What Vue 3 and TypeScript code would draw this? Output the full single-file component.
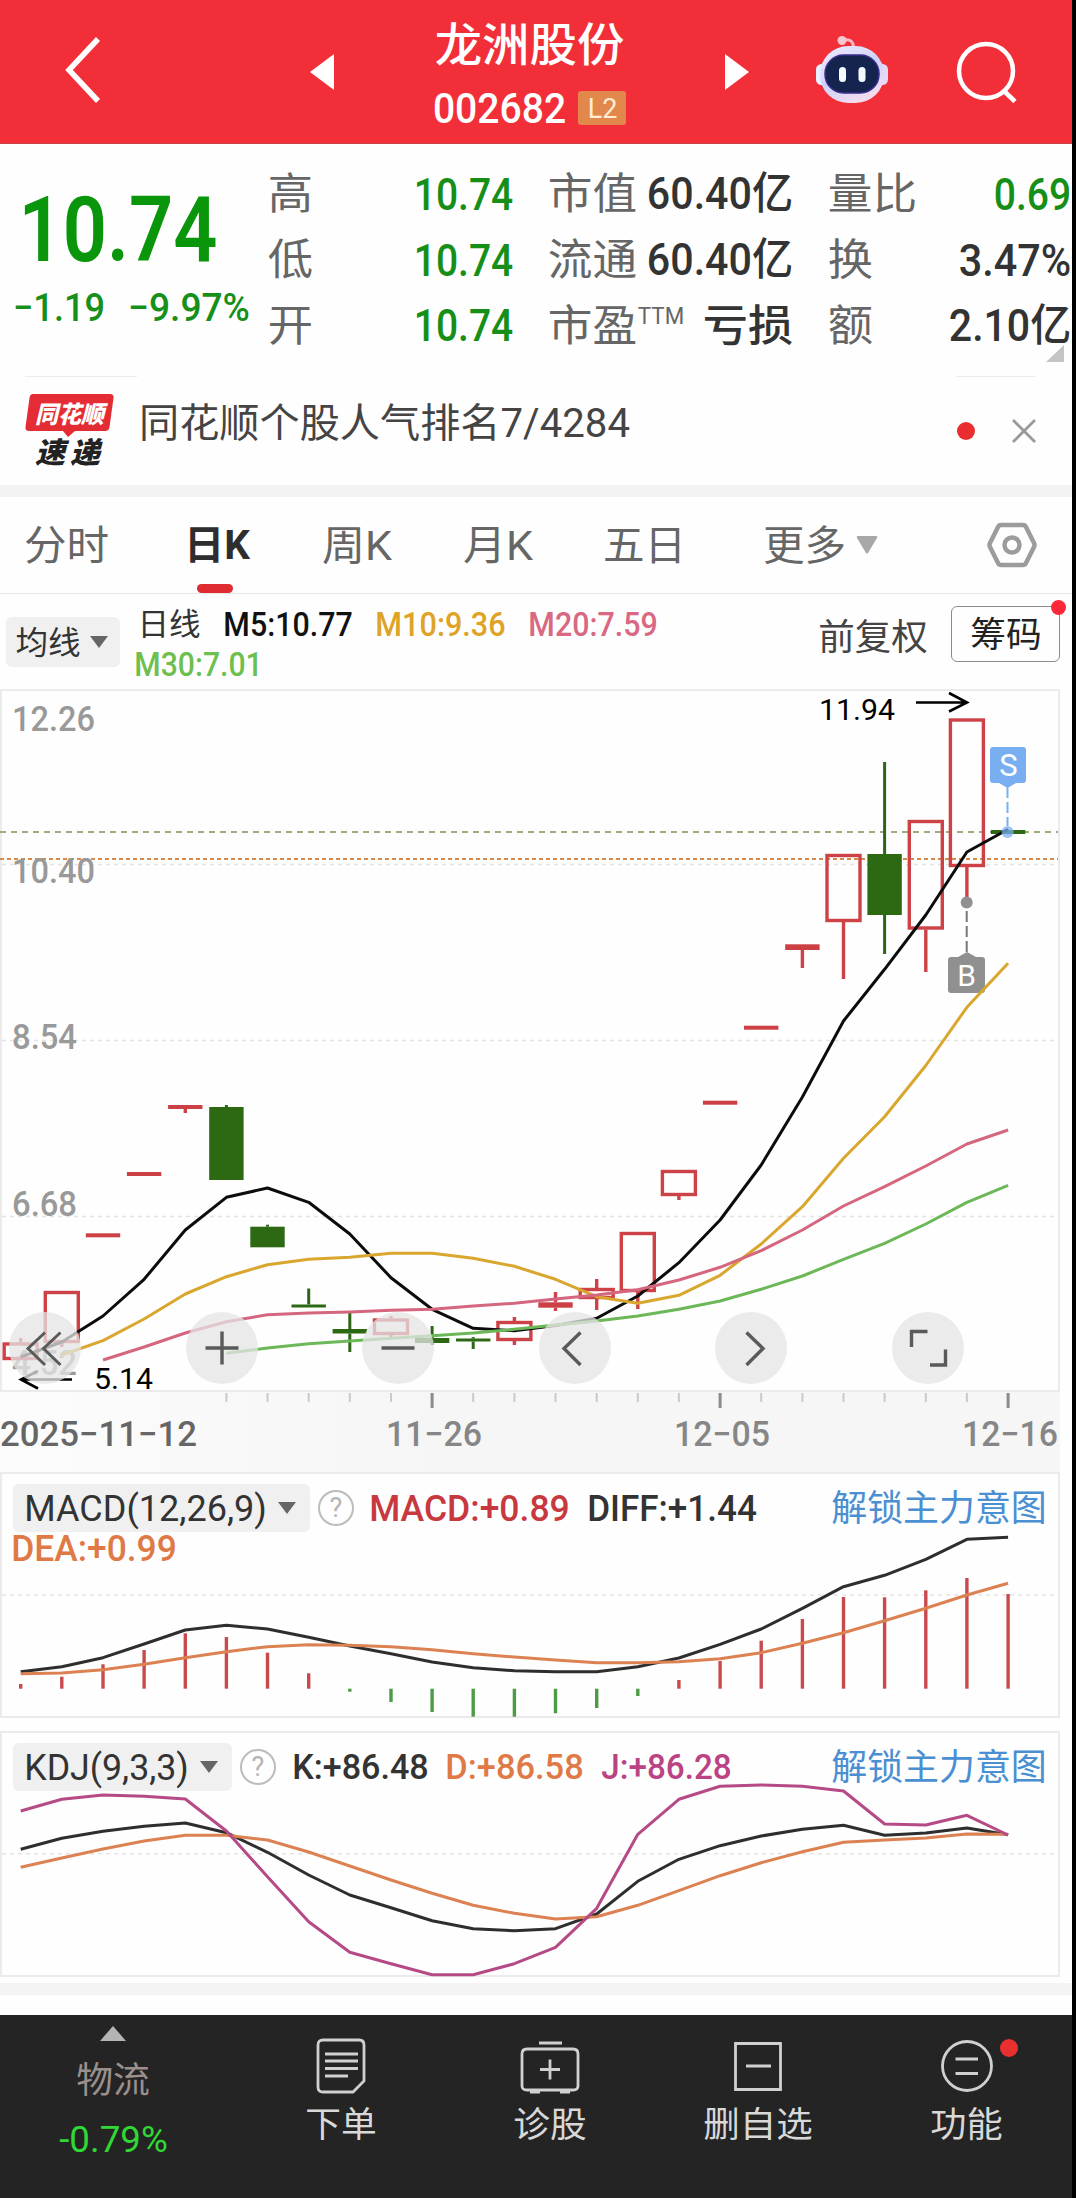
<script setup lang="ts">
import { h } from 'vue'

interface FitProps {
  t: string
  w: number
  s: number
}

// Text set to a given width; the box is as high as the capitals.
const Fit = (p: FitProps) => {
  const cap = Math.round(p.s * 0.711)
  return h('svg', { width: p.w, height: cap, style: 'overflow:visible;flex:none;display:block' }, [
    h(
      'text',
      {
        x: -p.s * 0.05,
        y: cap,
        'font-size': p.s,
        textLength: p.w + p.s * 0.1,
        lengthAdjust: 'spacingAndGlyphs',
        fill: 'currentColor',
      },
      p.t,
    ),
  ])
}
Fit.props = ['t', 'w', 's']

const STEP = 41.14
const px = (i: number): number => +(20.7 + STEP * i).toFixed(1)
const line = (start: number, ys: number[], top: number): string =>
  ys.map((y, k) => `${px(start + k)},${(y - top).toFixed(1)}`).join(' ')

type Kind = 'hollow' | 'up' | 'down'
interface Candle {
  i: number
  kind: Kind
  t: number
  b: number
  hi: number
  lo: number
}
const K_TOP = 689
const rows: [Kind, number, number, number, number][] = [
  ['hollow', 1342.5, 1360, 1338, 1360],
  ['hollow', 1291, 1343, 1291, 1347],
  ['up', 1233.3, 1237.3, 1235, 1235],
  ['up', 1172, 1176, 1174, 1174],
  ['up', 1105, 1109, 1107, 1113],
  ['down', 1107, 1180, 1105, 1180],
  ['down', 1226.7, 1247.3, 1224.7, 1247],
  ['down', 1304.5, 1307.5, 1288.5, 1306],
  ['down', 1329, 1333.5, 1313, 1352],
  ['hollow', 1318.5, 1335, 1316, 1339],
  ['down', 1338, 1343, 1326, 1345],
  ['down', 1338.5, 1341.5, 1337, 1349],
  ['hollow', 1321, 1341, 1317, 1345],
  ['up', 1302.3, 1307.7, 1292, 1311],
  ['hollow', 1288, 1299, 1279, 1310],
  ['hollow', 1232, 1292, 1232, 1309],
  ['hollow', 1170, 1196, 1170, 1200],
  ['up', 1100.7, 1104.7, 1102, 1102],
  ['up', 1025.7, 1029.7, 1027, 1027],
  ['up', 944.3, 950, 947, 968],
  ['hollow', 854, 922, 854, 979],
  ['down', 854, 915, 762, 954],
  ['hollow', 820, 929.5, 820, 972],
  ['hollow', 718.5, 867, 718.5, 902],
  ['down', 830, 834, 832, 832],
]
const candles: Candle[] = rows.map(([kind, t, b, hi, lo], i) => ({
  i,
  kind,
  t: t - K_TOP,
  b: b - K_TOP,
  hi: hi - K_TOP,
  lo: lo - K_TOP,
}))

const averages = [
  { c: 'ma5', p: line(0, [1357, 1342, 1316, 1279.3, 1230, 1197.3, 1188, 1202.3, 1234, 1277.7, 1309.3, 1328.3, 1330.7, 1325.5, 1318.3, 1296, 1262.7, 1220, 1165, 1097, 1021, 969.3, 915, 852, 829.3], K_TOP) },
  { c: 'ma10', p: line(1, [1355, 1340.7, 1319, 1294, 1276.7, 1264.7, 1259.3, 1257.3, 1253.3, 1253.3, 1258.3, 1266.3, 1279.3, 1296.7, 1303.3, 1295.3, 1275.3, 1244, 1206.7, 1158.3, 1116.7, 1065.5, 1007.3, 963.3], K_TOP) },
  { c: 'ma20', p: line(2, [1360, 1347, 1333, 1321.7, 1314.7, 1313, 1312, 1310.3, 1309.3, 1306, 1303.3, 1299, 1295, 1289.7, 1280, 1267.3, 1250.7, 1230, 1206, 1186.7, 1166, 1144, 1130], K_TOP) },
  { c: 'ma30', p: line(5, [1353.3, 1348, 1343.7, 1341, 1338.3, 1335.7, 1333, 1329.3, 1325, 1321, 1316, 1309.3, 1301, 1289.3, 1276, 1259.3, 1243.3, 1224, 1202.3, 1185.3], K_TOP) },
]

const scale = [
  { t: '12.26', w: 80, y: 42 },
  { t: '10.40', w: 80, y: 194 },
  { t: '8.54', w: 62, y: 360 },
  { t: '6.68', w: 62, y: 527 },
  { t: '4.52', w: 62, y: 686 },
]
const ticks = Array.from({ length: 20 }, (_, k) => k + 5)
const isMajor = (i: number): boolean => i === 10 || i === 17 || i === 24
const dates = [
  { t: '2025−11−12', x: 2, w: 193, c: 'dark' },
  { t: '11−26', x: 388, w: 92, c: '' },
  { t: '12−05', x: 676, w: 92, c: '' },
  { t: '12−16', x: 964, w: 92, c: '' },
]

const M_TOP = 1472
const ZERO = 1688.7 - M_TOP
const macdBars = [1684, 1676.7, 1664.3, 1650, 1633.3, 1637, 1652.7, 1673.3, 1691.7, 1702, 1712, 1716.7, 1716.7, 1713.3, 1708, 1696, 1680, 1661, 1640.7, 1619, 1597, 1597.3, 1590.3, 1578, 1594].map((y) => y - M_TOP)
const macdLines = [
  { c: 'dark-line', p: line(0, [1671.7, 1666.7, 1657.7, 1644, 1630, 1625.3, 1629, 1637.3, 1646, 1653.7, 1662, 1667.7, 1670.7, 1671.7, 1671.7, 1666.7, 1658, 1644.3, 1629, 1608.3, 1586.7, 1575.3, 1559.3, 1539.3, 1537.3], M_TOP) },
  { c: 'orange-line', p: line(0, [1673.7, 1673, 1669.7, 1664.3, 1657.7, 1651.7, 1646.7, 1644.7, 1645.3, 1646.7, 1649.7, 1653.7, 1657, 1660, 1662.7, 1662.7, 1661.7, 1658.7, 1652.7, 1643.3, 1632.7, 1620.7, 1608.3, 1595, 1583.3], M_TOP) },
]

const J_TOP = 1731
const kdjLines = [
  { c: 'dark-line', p: line(0, [1849.3, 1838.3, 1831.3, 1826.3, 1823, 1832.7, 1852.3, 1875, 1895, 1907.7, 1920.7, 1928.7, 1930.7, 1928.7, 1914, 1881.3, 1859.3, 1845.7, 1836, 1829.3, 1825.3, 1835.3, 1833, 1828, 1834.7], J_TOP) },
  { c: 'orange-line', p: line(0, [1867.3, 1858, 1849, 1841, 1835.3, 1835.3, 1840, 1852, 1866, 1880, 1893.3, 1905.3, 1913.3, 1919, 1916.7, 1905.3, 1890.7, 1875.7, 1862.7, 1851.7, 1842.3, 1840, 1838, 1834, 1834.3], J_TOP) },
  { c: 'purple-line', p: line(0, [1811, 1799.3, 1795, 1796.3, 1799, 1831, 1876.7, 1921.7, 1952.3, 1963.7, 1974.7, 1974.7, 1963.7, 1947.3, 1908.3, 1834.3, 1799.3, 1786.3, 1785, 1786.3, 1791, 1824, 1825, 1815.3, 1835], J_TOP) },
]

const tools = [
  'M36 20.500 19 36.500l17 16.500M51.500 20.500 34.500 36.500l17 16.500',
  'M36 19.500v33M19.500 36h33',
  'M19.500 36h33',
  'M41.500 20.500 25 36.500l16.500 16.500',
  'M31.500 20.500 48 36.500 31.500 53',
  'M35.500 19.500H19.500v15.500M38 53h15.500V37.500',
]
</script>

<template>
  <div class="screen">
    <header class="top">
      <svg class="back" width="40" height="72" viewBox="0 0 40 72"><path d="M35 5 6 36l29 31" /></svg>
      <svg class="prev" width="24" height="36" viewBox="0 0 24 36"><path d="M0 18 24 0v36z" /></svg>
      <div class="title">
        <Fit class="name" t="龙洲股份" :w="185" :s="46" />
        <div class="code">
          <Fit class="medium" t="002682" :w="129" :s="42" />
          <span class="level"><Fit t="L2" :w="27" :s="27" /></span>
        </div>
      </div>
      <svg class="next" width="24" height="36" viewBox="0 0 24 36"><path d="M24 18 0 0v36z" /></svg>
      <svg class="robot" width="74" height="70" viewBox="0 0 74 70">
        <defs>
          <linearGradient id="shell" x1="0" y1="0" x2="0.6" y2="1">
            <stop offset="0" stop-color="#f4ecff" />
            <stop offset="0.55" stop-color="#cfd3fb" />
            <stop offset="1" stop-color="#f3dcee" />
          </linearGradient>
        </defs>
        <path d="M27 6.500c7-2 11 0 11.500 6" fill="none" stroke="#fbb6c4" stroke-width="3" />
        <circle cx="27" cy="6.500" r="4.500" fill="#fcc6d0" />
        <rect x="1" y="30" width="11" height="21" rx="5.500" fill="#eaf0ff" />
        <rect x="62" y="30" width="11" height="21" rx="5.500" fill="#e3d9fb" />
        <rect x="5" y="12" width="64" height="57" rx="28" fill="url(#shell)" />
        <rect x="10" y="21" width="54" height="38" rx="18.500" fill="#15244f" stroke="#3a2f8a" stroke-width="1.500" />
        <rect x="24" y="33" width="7" height="15" rx="3.500" fill="#f4fbff" />
        <rect x="43.500" y="33" width="7" height="15" rx="3.500" fill="#f4fbff" />
      </svg>
      <svg class="search" width="62" height="64" viewBox="0 0 62 64"><circle cx="30" cy="31" r="27" /><path d="m48 51 11 10.500" /></svg>
    </header>

    <section class="quote">
      <div class="last">
        <Fit class="price" t="10.74" :w="190" :s="90" />
        <div class="change">
          <Fit class="medium" t="−1.19" :w="88" :s="39" />
          <Fit class="medium" t="−9.97%" :w="118" :s="39" />
        </div>
      </div>
      <div class="stats">
        <div class="col">
          <div class="stat"><Fit t="高" :w="41" :s="43" /><Fit class="num down" t="10.74" :w="95" :s="45" /></div>
          <div class="stat"><Fit t="低" :w="41" :s="43" /><Fit class="num down" t="10.74" :w="95" :s="45" /></div>
          <div class="stat"><Fit t="开" :w="41" :s="43" /><Fit class="num down" t="10.74" :w="95" :s="45" /></div>
        </div>
        <div class="col">
          <div class="stat"><Fit t="市值" :w="85" :s="43" /><Fit class="num" t="60.40亿" :w="142" :s="44" /></div>
          <div class="stat"><Fit t="流通" :w="85" :s="43" /><Fit class="num" t="60.40亿" :w="142" :s="44" /></div>
          <div class="stat">
            <span class="pe"><Fit t="市盈" :w="85" :s="43" /><Fit class="sup" t="TTM" :w="44" :s="23" /></span>
            <Fit class="num" t="亏损" :w="86" :s="43" />
          </div>
        </div>
        <div class="col end">
          <div class="stat"><Fit t="量比" :w="85" :s="43" /><Fit class="num down" t="0.69" :w="73" :s="45" /></div>
          <div class="stat"><Fit t="换" :w="41" :s="43" /><Fit class="num" t="3.47%" :w="108" :s="45" /></div>
          <div class="stat"><Fit t="额" :w="41" :s="43" /><Fit class="num" t="2.10亿" :w="118" :s="44" /></div>
        </div>
      </div>
      <svg class="corner" width="18" height="17" viewBox="0 0 18 17"><path d="M18 0v17H0z" fill="#c4c4c4" /></svg>
    </section>

    <section class="news">
      <div class="rules"><i></i><i></i></div>
      <svg class="brand" width="90" height="76" viewBox="0 0 90 76">
        <path d="M8 1h77q4 0 3.500 4l-4 29q-.5 4-4.500 4H50l-7 6-5-6H4q-4 0-3.500-4l4-29Q5 1 8 1z" fill="#e32c33" />
        <text x="10" y="30" font-size="24" textLength="69" lengthAdjust="spacingAndGlyphs" class="brand-top">同花顺</text>
        <text x="10" y="70" font-size="29" textLength="30" lengthAdjust="spacingAndGlyphs" class="brand-low">速</text>
        <text x="45" y="70" font-size="29" textLength="30" lengthAdjust="spacingAndGlyphs" class="brand-low">递</text>
      </svg>
      <Fit class="headline" t="同花顺个股人气排名7/4284" :w="487" :s="40" />
      <i class="unread"></i>
      <svg class="close" width="24" height="24" viewBox="0 0 24 24"><path d="m1 1 22 22M23 1 1 23" /></svg>
    </section>

    <nav class="tabs">
      <Fit class="t1" t="分时" :w="81" :s="41" />
      <span class="tab-on"><Fit t="日K" :w="62" :s="40" /></span>
      <Fit class="t3" t="周K" :w="66" :s="41" />
      <Fit class="t4" t="月K" :w="66" :s="41" />
      <Fit class="t5" t="五日" :w="79" :s="41" />
      <Fit class="t6" t="更多" :w="79" :s="41" />
      <svg class="more" width="22" height="18" viewBox="0 0 22 18"><path d="M2 0h18q2 0 1 2L12 17q-1 1-2 0L1 2Q0 0 2 0z" /></svg>
      <svg class="gear" width="50" height="46" viewBox="0 0 50 46"><path d="M14 3h22q2 0 3 2l8 16q1 2 0 4l-8 16q-1 2-3 2H14q-2 0-3-2L3 25q-1-2 0-4l8-16q1-2 3-2z" /><circle cx="25" cy="23" r="7.500" /></svg>
    </nav>

    <section class="legend">
      <button class="chip avg"><Fit t="均线" :w="62" :s="32" /><svg width="18" height="12" viewBox="0 0 18 12"><path d="M0 0h18L9 12z" /></svg></button>
      <div class="values">
        <div class="vrow">
          <Fit class="ink" t="日线" :w="60" :s="31" />
          <Fit class="v5" t="M5:10.77" :w="126" :s="33" />
          <Fit class="v10" t="M10:9.36" :w="127" :s="33" />
          <Fit class="v20" t="M20:7.59" :w="126" :s="33" />
        </div>
        <Fit class="v30" t="M30:7.01" :w="125" :s="33" />
      </div>
      <Fit class="adjust" t="前复权" :w="106" :s="36" />
      <button class="chips"><Fit t="筹码" :w="68" :s="35" /><i></i></button>
    </section>

    <section class="kline">
      <svg class="plot" width="1060" height="703" viewBox="0 0 1060 703">
        <rect x="1" y="1" width="1058" height="701" class="frame" />
        <path d="M2 175.500h1056M2 351.500h1056M2 527.500h1056" class="grid" />
        <path d="M0 143h1058" class="guide-green" />
        <path d="M0 170h1058" class="guide-orange" />
        <text v-for="s in scale" :key="s.t" class="scale" x="12" :y="s.y" font-size="35" :textLength="s.w + 3" lengthAdjust="spacingAndGlyphs">{{ s.t }}</text>
        <g v-for="c in candles" :key="c.i" :class="c.kind">
          <path v-if="c.hi < c.t" :d="`M${px(c.i)} ${c.hi}V${c.t}`" />
          <path v-if="c.lo > c.b" :d="`M${px(c.i)} ${c.b}V${c.lo}`" />
          <rect v-if="c.kind === 'hollow'" :x="px(c.i) - 16.500" :y="c.t + 1.500" width="33" :height="c.b - c.t - 3" />
          <rect v-else class="solid" :x="px(c.i) - 17.200" :y="c.t" width="34.400" :height="c.b - c.t" />
        </g>
        <g class="mark-b">
          <circle cx="966.700" cy="213.500" r="6" />
          <path d="M966.700 222v42" class="stem" />
          <path d="M951 268h7l9-5 9 5h6q3 0 3 3v30q0 3-3 3h-31q-3 0-3-3v-30q0-3 3-3z" />
          <text x="966.700" y="297" font-size="30" text-anchor="middle">B</text>
        </g>
        <polyline v-for="a in averages" :key="a.c" :points="a.p" :class="['ma', a.c]" />
        <g class="mark-s">
          <circle cx="1007.500" cy="143" r="6" />
          <path d="M1007.500 98v39" class="stem" />
          <path d="M993 58h30q3 0 3 3v30q0 3-3 3h-7l-8.500 5-8.500-5h-6q-3 0-3-3V61q0-3 3-3z" />
          <text x="1008.500" y="87" font-size="31" text-anchor="middle">S</text>
        </g>
        <text class="extreme" x="819" y="31" font-size="29" textLength="76" lengthAdjust="spacingAndGlyphs">11.94</text>
        <path class="arrow" d="M916 13.500h50M949 4l18 9.500-18 9" />
        <text class="extreme" x="94" y="700" font-size="29" textLength="59" lengthAdjust="spacingAndGlyphs">5.14</text>
        <path class="arrow" d="M72 690.500H22M38 682l-17 8.500 17 9" />
      </svg>
      <div class="tools">
        <button v-for="d in tools" :key="d"><svg width="72" height="72" viewBox="0 0 72 72"><path :d="d" /></svg></button>
      </div>
    </section>

    <svg class="axis" width="1060" height="80" viewBox="0 0 1060 80">
      <path v-for="i in ticks" :key="i" :d="`M${px(i)} 1v${isMajor(i) ? 15 : 9}`" :class="isMajor(i) ? 'major' : 'minor'" />
      <text v-for="d in dates" :key="d.t" :class="['date', d.c]" :x="d.x - 2" y="54" font-size="35" :textLength="d.w + 4" lengthAdjust="spacingAndGlyphs">{{ d.t }}</text>
    </svg>

    <section class="study macd">
      <svg class="plot" width="1060" height="246" viewBox="0 0 1060 246">
        <rect x="1" y="1" width="1058" height="244" class="frame" />
        <path d="M2 123h1056" class="grid" />
        <path v-for="(y, i) in macdBars" :key="i" :d="`M${px(i)} ${ZERO}V${y}`" :class="y < ZERO ? 'bar-up' : 'bar-down'" />
        <polyline v-for="l in macdLines" :key="l.c" :points="l.p" :class="['ma', l.c]" />
      </svg>
      <div class="head">
        <button class="chip sel"><Fit t="MACD(12,26,9)" :w="239" :s="36" /><svg width="18" height="12" viewBox="0 0 18 12"><path d="M0 0h18L9 12z" /></svg></button>
        <span class="help">?</span>
        <Fit class="red" t="MACD:+0.89" :w="197" :s="36" />
        <Fit class="ink" t="DIFF:+1.44" :w="166" :s="36" />
        <Fit class="link" t="解锁主力意图" :w="212" :s="36" />
      </div>
      <Fit class="orange" t="DEA:+0.99" :w="162" :s="36" />
    </section>

    <section class="study kdj">
      <svg class="plot" width="1060" height="246" viewBox="0 0 1060 246">
        <rect x="1" y="1" width="1058" height="244" class="frame" />
        <path d="M2 122.700h1056" class="grid" />
        <polyline v-for="l in kdjLines" :key="l.c" :points="l.p" :class="['ma', l.c]" />
      </svg>
      <div class="head">
        <button class="chip sel"><Fit t="KDJ(9,3,3)" :w="161" :s="36" /><svg width="18" height="12" viewBox="0 0 18 12"><path d="M0 0h18L9 12z" /></svg></button>
        <span class="help">?</span>
        <Fit class="ink" t="K:+86.48" :w="133" :s="35" />
        <Fit class="orange" t="D:+86.58" :w="135" :s="35" />
        <Fit class="purple" t="J:+86.28" :w="127" :s="35" />
        <Fit class="link" t="解锁主力意图" :w="212" :s="36" />
      </div>
    </section>

    <div class="band"></div>

    <footer class="bottom">
      <div class="sector">
        <svg width="26" height="15" viewBox="0 0 26 15"><path d="M13 0 26 15H0z" fill="#b4b4b4" /></svg>
        <Fit class="sector-name" t="物流" :w="70" :s="36" />
        <Fit class="sector-rate" t="-0.79%" :w="105" :s="36" />
      </div>
      <div class="action order">
        <svg width="50" height="56" viewBox="0 0 50 56"><path d="M7 2h36q5 0 5 5v36L37 54H7q-5 0-5-5V7q0-5 5-5zM9 16h33M9 23h33M9 30.500h33M9 38h23" /></svg>
        <Fit t="下单" :w="68" :s="35" />
      </div>
      <div class="action doctor">
        <svg width="60" height="56" viewBox="0 0 60 56"><path d="M7 11h46q5 0 5 5v32q0 4-5 4H7q-5 0-5-4V16q0-5 5-5zM19 5h23M30 21.500v20M20 31.500h20M10 54h10M40 54h10" /></svg>
        <Fit t="诊股" :w="70" :s="35" />
      </div>
      <div class="action remove">
        <svg width="50" height="56" viewBox="0 0 50 56"><path d="M2.500 5.500h45v46h-45zM13 28h25" /></svg>
        <Fit t="删自选" :w="106" :s="35" />
      </div>
      <div class="action feature">
        <svg width="56" height="56" viewBox="0 0 56 56"><circle cx="28" cy="28" r="24.500" /><path d="M16.500 21H39M16.500 35.500H39" /></svg>
        <Fit t="功能" :w="69" :s="35" />
        <i></i>
      </div>
    </footer>
  </div>
</template>

<style>
body {
  background: #000;
}
</style>

<style scoped>
.screen {
  width: 1072px;
  height: 2198px;
  overflow: hidden;
  background: #fefefe;
  color: #333;
  font-family: Roboto, 'Noto Sans CJK SC', sans-serif;
}
button {
  border: 0;
  padding: 0;
  margin: 0;
  font: inherit;
  color: inherit;
  background: none;
  flex: none;
}
svg {
  display: block;
  flex: none;
}
.medium {
  font-weight: 500;
}

/* header */
.top {
  display: flex;
  align-items: flex-start;
  box-sizing: border-box;
  height: 144px;
  background: #f22f38;
  border-bottom: 1px solid #c8444a;
  color: #fff;
}
.back {
  margin: 34px 0 0 63px;
}
.back path,
.search path,
.search circle {
  fill: none;
  stroke: #fff;
  stroke-width: 4.5;
}
.back path {
  stroke-width: 5.5;
}
.prev,
.next {
  fill: #fff;
  margin-top: 54px;
}
.prev {
  margin-left: 207px;
}
.title {
  width: 191px;
  margin-left: 101px;
  padding-top: 28px;
}
.name {
  margin-left: 2px;
  font-weight: 500;
}
.code {
  display: flex;
  align-items: center;
  margin-top: 30px;
}
.level {
  display: flex;
  align-items: center;
  justify-content: center;
  width: 48px;
  height: 34px;
  margin-left: 14px;
  border-radius: 3px;
  background: #e2884c;
  color: #ffedd6;
}
.next {
  margin-left: 99px;
}
.robot {
  margin: 34px 0 0 66px;
}
.search {
  margin: 40px 0 0 67px;
}

/* quote */
.quote {
  position: relative;
  display: flex;
  height: 228px;
}
.last {
  width: 247px;
  padding: 53px 0 0 23px;
  color: #09960b;
}
.price {
  font-weight: 600;
}
.change {
  display: flex;
  gap: 27px;
  margin: 32px 0 0 -8px;
  color: #16901a;
}
.stats {
  display: flex;
  gap: 39.5px;
  padding-top: 17px;
}
.col {
  flex: none;
  width: 240.500px;
}
.col.end {
  width: 239px;
}
.stat {
  display: flex;
  align-items: center;
  justify-content: space-between;
  height: 65.700px;
  color: #666;
}
.num {
  font-weight: 500;
  color: #333;
}
.num.down {
  color: #158f17;
}
.pe {
  display: flex;
  gap: 4px;
}
.sup {
  margin-top: -2px;
}
.corner {
  position: absolute;
  right: 8px;
  top: 201px;
}

/* news strip */
.news {
  position: relative;
  display: flex;
  align-items: flex-start;
  height: 113px;
  border-bottom: 12px solid #f3f3f3;
}
.rules {
  position: absolute;
  left: 25px;
  right: 37px;
  top: 4px;
  display: flex;
  justify-content: space-between;
}
.rules i {
  width: 112px;
  height: 1px;
  background: #ececec;
}
.rules i:last-child {
  width: 79px;
}
.brand {
  margin: 21px 0 0 25px;
}
.brand-top,
.brand-low {
  font-weight: 900;
  font-style: italic;
}
.brand-top {
  fill: #fff;
}
.brand-low {
  fill: #222;
}
.headline {
  margin: 37px 0 0 26px;
  color: #444;
}
.unread {
  flex: none;
  width: 18px;
  height: 18px;
  margin: 50px 0 0 329px;
  border-radius: 50%;
  background: #e92d30;
}
.close {
  margin: 47px 0 0 37px;
}
.close path {
  fill: none;
  stroke: #999;
  stroke-width: 2.8;
}

/* period tabs */
.tabs {
  display: flex;
  align-items: center;
  box-sizing: border-box;
  height: 97px;
  border-bottom: 1px solid #e6e6e6;
  color: #666;
}
.t1 {
  margin-left: 26px;
}
.tab-on {
  position: relative;
  margin-left: 79px;
  font-weight: 700;
  color: #2e2e2e;
}
.tab-on::after {
  content: '';
  position: absolute;
  left: 11px;
  top: 53px;
  width: 36px;
  height: 9px;
  border-radius: 5px;
  background: #e02b30;
}
.t3 {
  margin-left: 76px;
}
.t4 {
  margin-left: 75px;
}
.t5 {
  margin-left: 74px;
}
.t6 {
  margin-left: 81px;
}
.more {
  margin-left: 12px;
  fill: #a8a8a8;
}
.gear {
  margin-left: 109px;
  fill: none;
  stroke: #9c9c9c;
  stroke-width: 4.5;
}

/* moving average legend */
.legend {
  display: flex;
  align-items: flex-start;
  height: 95px;
}
.chip {
  display: flex;
  align-items: center;
  background: #f0f0f0;
  border-radius: 6px;
  color: #333;
}
.chip svg:last-child {
  fill: #666;
}
.avg {
  width: 114px;
  height: 50px;
  margin: 23px 0 0 6px;
  padding-left: 11px;
  gap: 11px;
}
.values {
  width: 525px;
  margin: 19px 0 0 16px;
}
.vrow {
  display: flex;
  gap: 26px;
  margin-left: 3px;
}
.v5,
.v10,
.v20,
.v30 {
  font-weight: 500;
}
.v5 {
  color: #111;
}
.v10 {
  color: #dfa326;
}
.v20 {
  color: #d96882;
}
.v30 {
  margin-top: 17px;
  color: #6dbf50;
}
.adjust {
  margin: 30px 0 0 159px;
  color: #444;
}
.chips {
  position: relative;
  display: flex;
  align-items: center;
  justify-content: center;
  box-sizing: border-box;
  width: 109px;
  height: 56px;
  margin: 12px 0 0 25px;
  border: 1.5px solid #8c8c8c;
  border-radius: 6px;
  color: #222;
}
.chips i {
  position: absolute;
  right: -7px;
  top: -7px;
  width: 15px;
  height: 15px;
  border-radius: 50%;
  background: #fc283a;
}

/* charts */
.frame {
  fill: none;
  stroke: #ebebeb;
  stroke-width: 2;
}
.grid {
  stroke: #e3e3e3;
  stroke-width: 1.5;
  stroke-dasharray: 4 4;
}
.ma {
  fill: none;
  stroke-width: 3;
  stroke-linejoin: round;
}
.kline {
  position: relative;
  height: 703px;
}
.guide-green {
  stroke: #a2ab80;
  stroke-width: 2;
  stroke-dasharray: 6 5;
}
.guide-orange {
  stroke: #d98a4a;
  stroke-width: 2;
  stroke-dasharray: 4 3;
}
.scale {
  fill: #999;
  font-weight: 500;
}
.hollow path,
.hollow rect {
  fill: none;
  stroke: #cc4247;
  stroke-width: 3.4;
}
.up path {
  stroke: #cc4247;
  stroke-width: 3.4;
}
.up .solid {
  fill: #cc3f44;
}
.down path {
  stroke: #2d6616;
  stroke-width: 3;
}
.down .solid {
  fill: #2d6812;
}
.ma5 {
  stroke: #0c0c0c;
}
.ma10 {
  stroke: #d9a62e;
}
.ma20 {
  stroke: #d5667f;
}
.ma30 {
  stroke: #6cb858;
}
.mark-b path,
.mark-b circle {
  fill: #909090;
}
.mark-b .stem {
  stroke: #777;
  stroke-width: 2;
  stroke-dasharray: 11 4;
}
.mark-s path,
.mark-s circle {
  fill: #79aff0;
}
.mark-s circle {
  opacity: 0.75;
}
.mark-s .stem {
  stroke: #79aff0;
  stroke-width: 2;
  stroke-dasharray: 11 4;
}
.mark-b text,
.mark-s text {
  fill: #fff;
}
.extreme {
  fill: #000;
}
.arrow {
  fill: none;
  stroke: #000;
  stroke-width: 2.6;
}
.tools {
  position: absolute;
  left: 9px;
  top: 622.500px;
  display: flex;
  gap: 104.600px;
}
.tools button {
  width: 72px;
  height: 72px;
  border-radius: 50%;
  background: rgba(229, 229, 229, 0.76);
}
.tools path {
  fill: none;
  stroke: #5a5a5a;
  stroke-width: 3.4;
}
.tools button:first-child path {
  stroke-width: 3;
}
.axis {
  background: linear-gradient(90deg, #fcfcfc, #f6f6f6 40%, #f6f6f6);
}
.minor {
  stroke: #cacaca;
  stroke-width: 2;
}
.major {
  stroke: #8c8c8c;
  stroke-width: 3;
}
.date {
  fill: #868686;
  font-weight: 500;
}
.date.dark {
  fill: #666;
}

/* studies */
.study {
  position: relative;
  height: 246px;
}
.study .plot {
  position: absolute;
  left: 0;
  top: 0;
}
.macd {
  margin-bottom: 13px;
}
.bar-up {
  stroke: #c94a4d;
  stroke-width: 3.4;
}
.bar-down {
  stroke: #4d9c45;
  stroke-width: 3.4;
}
.dark-line {
  stroke: #2e2e2e;
}
.orange-line {
  stroke: #dc8152;
}
.purple-line {
  stroke: #b54a86;
}
.head {
  position: relative;
  display: flex;
  align-items: center;
  height: 48px;
  padding: 11.500px 0 0 13px;
}
.sel {
  height: 48px;
  padding: 0 14px 0 13px;
  gap: 12.500px;
}
.help {
  flex: none;
  box-sizing: border-box;
  width: 36px;
  height: 36px;
  margin-left: 8.500px;
  border: 2.5px solid #bcbcbc;
  border-radius: 50%;
  color: #b4b4b4;
  font-size: 27px;
  line-height: 32px;
  text-align: center;
}
.head .red {
  margin-left: 17px;
  color: #c8393f;
  font-weight: 500;
}
.head .ink {
  margin-left: 21px;
  font-weight: 500;
}
.head .link {
  margin-left: auto;
  margin-right: 27px;
  color: #4a8fd2;
}
.macd .orange {
  position: relative;
  margin: 3px 0 0 13px;
}
.orange {
  color: #df7a46;
  font-weight: 500;
}
.kdj .ink {
  margin-left: 18px;
}
.kdj .orange {
  margin-left: 20px;
}
.kdj .purple {
  margin-left: 21px;
  color: #bb4384;
  font-weight: 500;
}
.band {
  height: 12px;
  margin: 6px 0 20px;
  background: #f4f4f4;
}

/* bottom bar */
.bottom {
  position: relative;
  display: flex;
  height: 183px;
  background: #242424;
  color: #d8d8d8;
}
.sector {
  display: flex;
  flex-direction: column;
  align-items: center;
  width: 226px;
  padding-top: 11px;
}
.sector-name {
  margin-top: 26px;
  color: #9b8f8c;
}
.sector-rate {
  margin-top: 33px;
  color: #30d834;
}
.action {
  position: relative;
  display: flex;
  flex-direction: column;
  align-items: center;
  gap: 18px;
  width: 208.500px;
  padding-top: 23px;
}
.action svg:first-child {
  fill: none;
  stroke: #d0d0d0;
  stroke-width: 2.8;
}
.order {
  margin-left: 11px;
}
.action i {
  position: absolute;
  right: 53px;
  top: 24px;
  width: 18px;
  height: 18px;
  border-radius: 50%;
  background: #ea2f30;
}
</style>
